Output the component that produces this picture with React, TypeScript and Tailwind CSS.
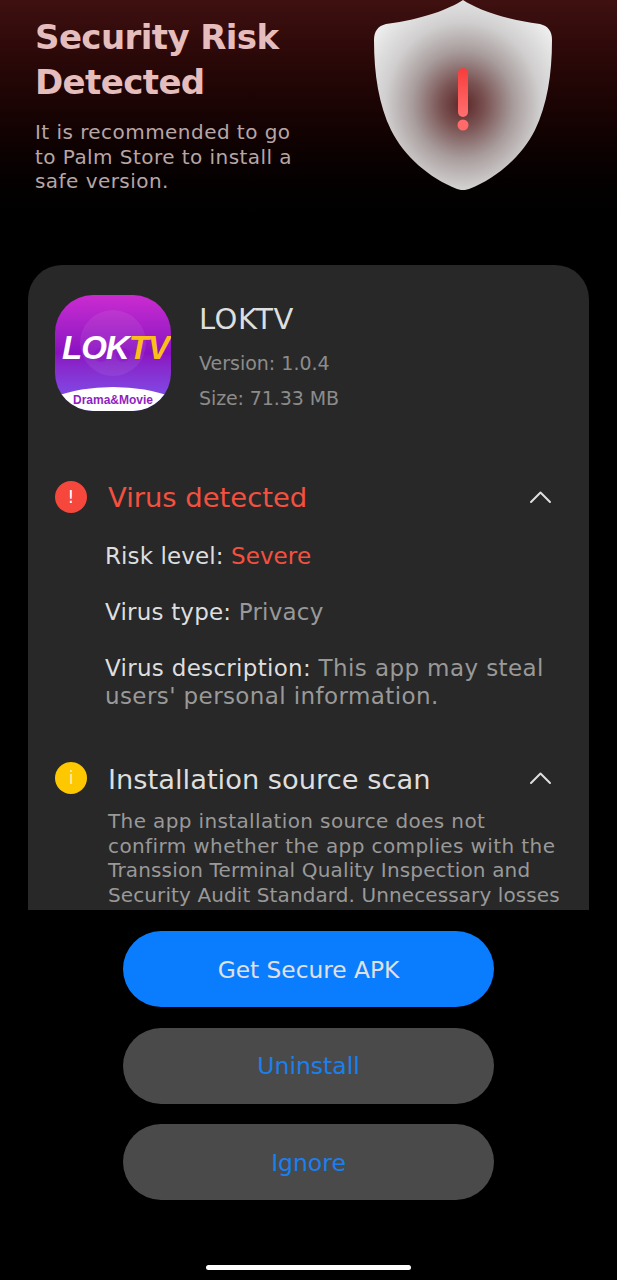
import React from "react";

const font = { fontFamily: '"DejaVu Sans", sans-serif' };

function Shield() {
  return (
    <svg width="178" height="190" viewBox="0 0 178 190" className="shrink-0">
      <defs>
        <radialGradient id="sg" cx="0.5" cy="0.55" r="0.62">
          <stop offset="0" stopColor="#5a2626" />
          <stop offset="0.2" stopColor="#7a5252" />
          <stop offset="0.46" stopColor="#a99d9d" />
          <stop offset="0.7" stopColor="#d0cece" />
          <stop offset="1" stopColor="#eeeeee" />
        </radialGradient>
        <linearGradient id="ex" x1="0" y1="0" x2="0" y2="1">
          <stop offset="0" stopColor="#f73c3c" />
          <stop offset="1" stopColor="#ff7070" />
        </linearGradient>
      </defs>
      <path
        d="M89 0 C75 9 50 19 12 24 C4 26 0 31 0 40 C0 75 5 105 17 130 C30 156 55 178 83 189 C87 190.500 91 190.500 95 189 C123 178 148 156 161 130 C173 105 178 75 178 40 C178 31 174 26 166 24 C128 19 103 9 89 0 Z"
        fill="url(#sg)"
      />
      <rect x="84" y="68" width="10" height="49" rx="5" fill="url(#ex)" />
      <circle cx="89" cy="125" r="5.500" fill="#ff6b6b" />
    </svg>
  );
}

function AppIcon() {
  return (
    <div className="relative w-[116px] h-[116px] rounded-[38px] overflow-hidden shrink-0 bg-gradient-to-b from-[#cb2bd0] via-[#8a10c2] to-[#7a55f0]">
      <svg width="116" height="116" viewBox="0 0 116 116" className="absolute left-0 top-0">
        <circle cx="58" cy="48" r="33" fill="#ffffff" fillOpacity="0.07" />
        <circle cx="46" cy="60" r="7" fill="#8a10c2" fillOpacity="0.4" />
        <circle cx="68" cy="60" r="7" fill="#8a10c2" fillOpacity="0.4" />
      </svg>
      <div className="absolute left-[7px] top-[31px] flex text-[33px] leading-[44px] font-bold italic tracking-[-1px] whitespace-nowrap" style={{ fontFamily: '"Liberation Sans", sans-serif' }}>
        <span className="text-white">LOK</span>
        <span className="text-[#fbbf1a]">TV</span>
      </div>
      <div className="absolute left-[-24px] right-[-24px] bottom-[-44px] h-[68px] bg-white rounded-[50%]" />
      <div className="absolute left-0 right-0 bottom-[3px] text-center text-[#8f1fc0] text-[12px] leading-[16px] font-bold whitespace-nowrap" style={{ fontFamily: '"Liberation Sans", sans-serif' }}>
        Drama&amp;Movie
      </div>
    </div>
  );
}

function Chevron() {
  return (
    <svg width="24" height="14" viewBox="0 0 24 14" fill="none" className="shrink-0">
      <path d="M3 12 L12.500 2.500 L22 12" stroke="#dedede" strokeWidth="2" strokeLinecap="round" strokeLinejoin="round" />
    </svg>
  );
}

function Dot({ color, glyph, tone }: { color: string; glyph: string; tone: string }) {
  return (
    <div className={`w-8 h-8 rounded-full flex items-center justify-center shrink-0 ${color}`}>
      <span className={`text-[17px] leading-none font-normal ${tone}`}>{glyph}</span>
    </div>
  );
}

export default function App() {
  return (
    <div className="w-[617px] h-[1280px] bg-black overflow-hidden flex flex-col" style={font}>
      <div className="h-[265px] shrink-0 bg-gradient-to-b from-[#3f1010] to-black flex justify-between pl-[35px] pr-[65px]">
        <div className="pt-[15px]">
          <h1 className="text-[34px] leading-[45px] font-bold text-[#e6bdbd] tracking-[-0.6px] m-0">
            Security Risk
            <br />
            Detected
          </h1>
          <p className="mt-[15px] text-[20px] leading-[24.500px] text-[#b8a6a6] tracking-[0.45px] w-[270px]">
            It is recommended to go to Palm Store to install a safe version.
          </p>
        </div>
        <Shield />
      </div>

      <div className="mx-[28px] h-[645px] shrink-0 bg-[#282828] rounded-t-[34px] overflow-hidden px-[27px] pt-[30px]">
        <div className="flex gap-[28px]">
          <AppIcon />
          <div className="pt-[5px]">
            <div className="text-[29px] leading-[38px] tracking-[0.5px] text-[#dedede]">LOKTV</div>
            <div className="mt-[8px] text-[19px] leading-[35px] text-[#8c8c8c]">Version: 1.0.4</div>
            <div className="text-[19px] leading-[35px] tracking-[-0.1px] text-[#8c8c8c]">Size: 71.33 MB</div>
          </div>
        </div>

        <div className="mt-[62px] h-[38px] flex items-center">
          <Dot color="bg-[#f5473b]" glyph="!" tone="text-white" />
          <div className="ml-[21px] flex-1 mt-[2px] text-[27.400px] leading-[38px] text-[#f5503f]">Virus detected</div>
          <div className="mr-[10px]"><Chevron /></div>
        </div>
        <div className="ml-[50px] mt-[26px] text-[23px] leading-[28px] text-[#dedede] flex flex-col gap-[28px]">
          <div className="tracking-[0.1px]">Risk level: <span className="text-[#f5503f]">Severe</span></div>
          <div className="tracking-[0.2px]">Virus type: <span className="text-[#999999]">Privacy</span></div>
          <div className="tracking-[0.3px]">Virus description: <span className="text-[#999999] tracking-[0.4px]">This app may steal users' personal information.</span></div>
        </div>

        <div className="mt-[49px] h-[38px] flex items-center">
          <Dot color="bg-[#fdc800]" glyph="i" tone="text-[#fff3b0]" />
          <div className="ml-[21px] flex-1 mt-[4px] text-[27.300px] leading-[38px] text-[#dedede]">Installation source scan</div>
          <div className="mr-[10px]"><Chevron /></div>
        </div>
        <p className="ml-[53px] mt-[12px] text-[20px] leading-[24.500px] text-[#999999] whitespace-nowrap">
          <span className="block tracking-[0.37px]">The app installation source does not</span>
          <span className="block tracking-[0.39px]">confirm whether the app complies with the</span>
          <span className="block tracking-[0.15px]">Transsion Terminal Quality Inspection and</span>
          <span className="block tracking-[0.1px]">Security Audit Standard. Unnecessary losses</span>
        </p>
      </div>

      <div className="flex flex-col items-center pt-[21px]">
        <button className="w-[371px] h-[76px] pt-[2px] rounded-full bg-[#0a7dff] text-[#e0e0e0] text-[23.300px]">Get Secure APK</button>
        <button className="mt-[21px] w-[371px] h-[76px] pt-[2px] rounded-full bg-[#4a4a4a] text-[#1a80ee] text-[23.500px]">Uninstall</button>
        <button className="mt-[20px] w-[371px] h-[76px] pt-[3px] rounded-full bg-[#4a4a4a] text-[#1a80ee] text-[23.500px]">Ignore</button>
      </div>

      <div className="mt-auto mb-[10px] mx-auto w-[205px] h-[5px] rounded-full bg-white" />
    </div>
  );
}
